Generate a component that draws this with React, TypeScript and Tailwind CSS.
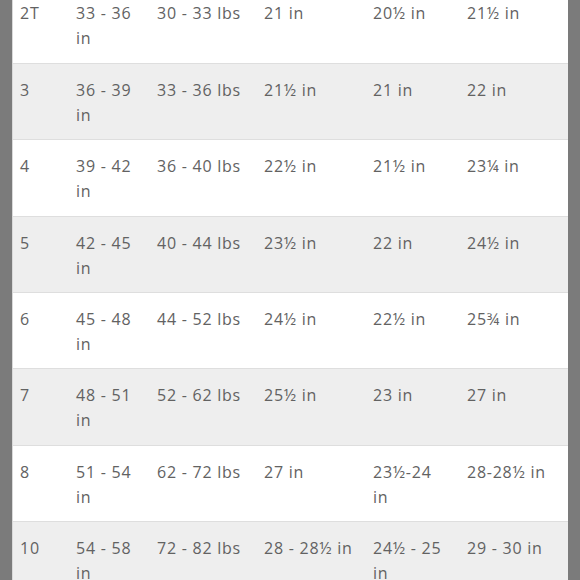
const rows: string[][][] = [
  [["2T"], ["33 - 36", "in"], ["30 - 33 lbs"], ["21 in"], ["20½ in"], ["21½ in"]],
  [["3"], ["36 - 39", "in"], ["33 - 36 lbs"], ["21½ in"], ["21 in"], ["22 in"]],
  [["4"], ["39 - 42", "in"], ["36 - 40 lbs"], ["22½ in"], ["21½ in"], ["23¼ in"]],
  [["5"], ["42 - 45", "in"], ["40 - 44 lbs"], ["23½ in"], ["22 in"], ["24½ in"]],
  [["6"], ["45 - 48", "in"], ["44 - 52 lbs"], ["24½ in"], ["22½ in"], ["25¾ in"]],
  [["7"], ["48 - 51", "in"], ["52 - 62 lbs"], ["25½ in"], ["23 in"], ["27 in"]],
  [["8"], ["51 - 54", "in"], ["62 - 72 lbs"], ["27 in"], ["23½-24", "in"], ["28-28½ in"]],
  [["10"], ["54 - 58", "in"], ["72 - 82 lbs"], ["28 - 28½ in"], ["24½ - 25", "in"], ["29 - 30 in"]],
];

const widths = ["w-[56px]", "w-[81px]", "w-[107px]", "w-[109px]", "w-[94px]", "w-[109px]"];

export default function App() {
  return (
    <div
      className="flex h-[580px] w-[580px] overflow-hidden bg-[#7b7b7b]"
      style={{ fontFamily: '"Open Sans", "Noto Sans", sans-serif' }}
    >
      <div className="ml-[12px] w-[556px] shrink-0 border-l border-[#d9d9d9] bg-white">
        <div className="-mt-[12.6px]">
          {rows.map((row, i) => (
            <div
              key={i}
              className={`flex h-[76.4px] border-b border-[#dedede] ${i % 2 === 1 ? "bg-[#eeeeee]" : "bg-white"}`}
            >
              {row.map((cell, j) => (
                <div
                  key={j}
                  className={`${widths[j]} shrink-0 pl-[7px] pt-[14px] text-[16px] leading-[25px] tracking-[0.75px] text-[#626262]`}
                >
                  {cell.map((line, k) => (
                    <div key={k} className="whitespace-nowrap">
                      {line}
                    </div>
                  ))}
                </div>
              ))}
            </div>
          ))}
        </div>
      </div>
    </div>
  );
}
